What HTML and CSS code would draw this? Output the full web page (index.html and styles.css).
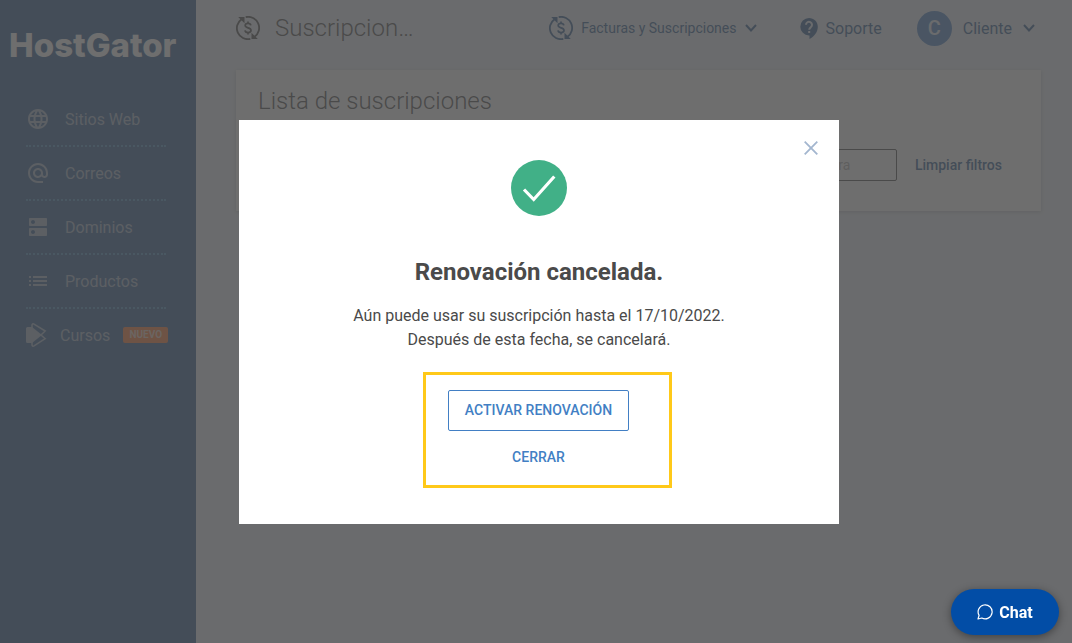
FILE: index.html
```html
<!DOCTYPE html>
<html lang="es">
<head>
    <meta charset="UTF-8">
    <meta name="viewport" content="width=device-width, initial-scale=1.0">
    <title>Suscripciones</title>
    <link rel="stylesheet" href="styles.css">
</head>
<body>
    <svg class="sprite" width="0" height="0" aria-hidden="true">
        <symbol id="icon-renew" viewBox="0 0 24 24">
            <path d="M5.500 3.200A11 11 0 0 0 14.300 22.900M9.700 1.100A11 11 0 0 1 18.500 20.800" fill="none" stroke="currentColor" stroke-width="1.800"/>
            <path d="M2.200 1h6.300v6.300zM21.800 23h-6.300v-6.300z" fill="currentColor"/>
            <path d="M14.800 9.300C14.600 8 13.600 7.400 12 7.400c-1.700 0-2.800.8-2.800 2.200 0 3 5.800 1.600 5.800 4.700 0 1.500-1.200 2.300-2.900 2.300-1.800 0-2.900-.8-3.100-2.200M12 5.500v2M12 16.500v2" fill="none" stroke="currentColor" stroke-width="1.700"/>
        </symbol>
        <symbol id="icon-chevron" viewBox="0 0 12 8">
            <path d="M1 1l5 5.500L11 1" fill="none" stroke="currentColor" stroke-width="2"/>
        </symbol>
    </svg>

    <div class="layout">
        <aside class="sidebar">
            <div class="logo">HostGator</div>
            <nav class="menu">
                <a href="#" class="menu-item">
                    <svg class="menu-icon" viewBox="2 2 20 20"><path d="M11.990 2C6.470 2 2 6.480 2 12s4.470 10 9.990 10C17.520 22 22 17.520 22 12S17.520 2 11.990 2zm6.930 6h-2.950c-.32-1.250-.78-2.450-1.380-3.560 1.840.63 3.370 1.910 4.330 3.560zM12 4.040c.83 1.200 1.480 2.530 1.910 3.960h-3.820c.43-1.430 1.080-2.760 1.910-3.960zM4.260 14C4.100 13.360 4 12.690 4 12s.1-1.360.26-2h3.380c-.08.66-.14 1.320-.14 2s.06 1.340.14 2H4.260zm.82 2h2.950c.32 1.250.78 2.450 1.380 3.560-1.840-.63-3.370-1.900-4.330-3.560zm2.950-8H5.080c.96-1.660 2.490-2.930 4.330-3.560C8.810 5.550 8.350 6.750 8.030 8zM12 19.960c-.83-1.200-1.480-2.530-1.910-3.960h3.820c-.43 1.430-1.080 2.760-1.910 3.960zM14.340 14H9.660c-.09-.66-.16-1.320-.16-2s.07-1.350.16-2h4.680c.09.65.16 1.320.16 2s-.07 1.340-.16 2zm.25 5.560c.6-1.110 1.060-2.310 1.380-3.560h2.950c-.96 1.650-2.490 2.930-4.330 3.560zM16.360 14c.08-.66.14-1.320.14-2s-.06-1.340-.14-2h3.380c.16.64.26 1.310.26 2s-.1 1.360-.26 2h-3.380z"/></svg>
                    Sitios Web
                </a>
                <a href="#" class="menu-item">
                    <svg class="menu-icon" viewBox="2 2 20 20"><path d="M12 2C6.480 2 2 6.480 2 12s4.480 10 10 10h5v-2h-5c-4.340 0-8-3.660-8-8s3.660-8 8-8 8 3.660 8 8v1.430c0 .79-.71 1.570-1.500 1.570s-1.500-.78-1.500-1.570V12c0-2.760-2.240-5-5-5s-5 2.240-5 5 2.240 5 5 5c1.380 0 2.640-.56 3.540-1.470.65.89 1.770 1.470 2.960 1.470 1.970 0 3.500-1.600 3.500-3.570V12c0-5.520-4.480-10-10-10zm0 13c-1.660 0-3-1.340-3-3s1.340-3 3-3 3 1.340 3 3-1.340 3-3 3z"/></svg>
                    Correos
                </a>
                <a href="#" class="menu-item">
                    <svg class="menu-icon" viewBox="2 2 20 20"><path d="M20 13H4c-.55 0-1 .45-1 1v6c0 .55.45 1 1 1h16c.55 0 1-.45 1-1v-6c0-.55-.45-1-1-1zM7 19c-1.100 0-2-.9-2-2s.9-2 2-2 2 .9 2 2-.9 2-2 2zM20 3H4c-.55 0-1 .45-1 1v6c0 .55.45 1 1 1h16c.55 0 1-.45 1-1V4c0-.55-.45-1-1-1zM7 9c-1.100 0-2-.9-2-2s.9-2 2-2 2 .9 2 2-.9 2-2 2z"/></svg>
                    Dominios
                </a>
                <a href="#" class="menu-item">
                    <svg class="menu-icon" viewBox="2 2 20 20"><path d="M3 13h2v-2H3v2zm0 4h2v-2H3v2zm0-8h2V7H3v2zm4 4h14v-2H7v2zm0 4h14v-2H7v2zM7 7v2h14V7H7z"/></svg>
                    Productos
                </a>
                <a href="#" class="menu-item menu-item-new">
                    <svg class="course-icon" viewBox="0 0 21 26">
                        <path d="M1.500 5H6l10 8-10 8H1.500A1.500 1.500 0 0 1 0 19.500v-13A1.500 1.500 0 0 1 1.500 5z"/>
                        <path d="M6 7V3.200c0-1.200 1-1.700 2-1.100L19.200 9 15 13l4.200 3.700L8 23.900c-1 .6-2 .1-2-1.100V19" fill="none" stroke="currentColor" stroke-width="1.500"/>
                    </svg>
                    Cursos
                    <span class="badge">NUEVO</span>
                </a>
            </nav>
        </aside>

        <main class="main">
            <header class="header">
                <svg class="renew-icon"><use href="#icon-renew"/></svg>
                <h1>Suscripcion…</h1>
                <nav class="top-nav">
                    <a href="#" class="billing">
                        <svg class="renew-icon"><use href="#icon-renew"/></svg>
                        Facturas y Suscripciones
                        <svg class="chevron"><use href="#icon-chevron"/></svg>
                    </a>
                    <a href="#" class="support">
                        <svg class="help-icon" viewBox="0 0 18 21">
                            <path d="M9 0a8.700 8.700 0 0 0 0 17.400h.5V21c5-2.400 8.300-7.200 8.300-12.200C17.800 3.900 13.900 0 9 0z"/>
                            <path class="help-mark" d="M6 6.800a3 3 0 1 1 4.900 2.300C9.700 10 9.200 10.400 9.200 11.700M9.200 13v2"/>
                        </svg>
                        Soporte
                    </a>
                    <a href="#" class="account">
                        <span class="avatar">C</span>
                        Cliente
                        <svg class="chevron"><use href="#icon-chevron"/></svg>
                    </a>
                </nav>
            </header>

            <section class="card">
                <h2>Lista de suscripciones</h2>
                <form class="filters">
                    <input type="text" aria-label="Compra" placeholder="Compra">
                    <button type="reset" class="clear-btn">Limpiar filtros</button>
                </form>
            </section>
        </main>
    </div>

    <div class="overlay">
        <div class="modal" role="dialog" aria-modal="true" aria-labelledby="modal-title">
            <button class="close-btn" aria-label="Cerrar">
                <svg width="14" height="14" viewBox="0 0 14 14"><path d="M.7.7l12.600 12.600M13.300.7L.7 13.300" stroke="currentColor" stroke-width="1.800"/></svg>
            </button>
            <svg class="check" viewBox="0 0 56 56">
                <circle cx="28" cy="28" r="28" fill="#41b087"/>
                <path d="M13 29.500l9.700 10L43.300 16.500" fill="none" stroke="#fff" stroke-width="3.200"/>
            </svg>
            <h2 id="modal-title">Renovación cancelada.</h2>
            <p>Aún puede usar su suscripción hasta el 17/10/2022.<br>Después de esta fecha, se cancelará.</p>
            <div class="actions">
                <button class="btn btn-outline">ACTIVAR RENOVACIÓN</button>
                <button class="btn">CERRAR</button>
            </div>
        </div>
    </div>

    <button class="chat-btn">
        <svg width="16" height="16" viewBox="0 0 16 16"><path d="M1 15l1.100-3.600A7 7 0 1 1 4.800 14z" fill="none" stroke="currentColor" stroke-width="1.200" stroke-linejoin="round"/></svg>
        Chat
    </button>
</body>
</html>
```
FILE: styles.css
```css
* {
    margin: 0;
    padding: 0;
    box-sizing: border-box;
}

body {
    font-family: Roboto, "Liberation Sans", sans-serif;
    font-size: 16px;
    color: #4a4a4a;
    background-color: #ebf0f7;
}

a {
    color: inherit;
    text-decoration: none;
}

button,
input {
    font-family: inherit;
    background: none;
    border: none;
}

button {
    cursor: pointer;
}

svg {
    flex-shrink: 0;
    fill: currentColor;
}

.sprite {
    position: absolute;
}

.layout {
    display: flex;
    min-height: 100vh;
}

/* Sidebar */
.sidebar {
    width: 196px;
    flex-shrink: 0;
    background-color: #2e5d93;
}

.logo {
    padding: 25px 0 28px 9px;
    font-family: Inter, sans-serif;
    font-size: 33px;
    line-height: 40px;
    font-weight: 800;
    color: #fff;
}

.menu {
    padding: 0 30px 0 26px;
    color: #a5b4c8;
}

.menu-item {
    display: flex;
    align-items: center;
    height: 54px;
    padding-left: 2px;
    gap: 17px;
    border-bottom: 2px dotted #4a90c0;
}

.menu-item-new {
    padding-left: 0;
    gap: 13px;
    border-bottom-color: transparent;
}

.menu-icon {
    width: 20px;
    height: 20px;
}

.course-icon {
    width: 21px;
    height: 26px;
}

.badge {
    flex-shrink: 0;
    width: 45px;
    border-radius: 2px;
    background-color: #ff7a33;
    color: #f0d0c0;
    font-size: 10px;
    line-height: 16px;
    font-weight: 700;
    text-align: center;
}

/* Header */
.main {
    flex: 1;
    min-width: 0;
    padding: 0 31px 0 40px;
}

.header {
    display: flex;
    align-items: center;
    height: 56px;
    margin-bottom: 14px;
}

.header h1,
.card h2 {
    font-size: 24px;
    line-height: 32px;
    font-weight: 300;
}

.header h1 {
    margin-left: 15px;
}

.renew-icon {
    width: 24px;
    height: 24px;
}

.top-nav {
    display: flex;
    align-items: center;
    margin-left: auto;
    padding-right: 6px;
    color: #2e5d93;
}

.top-nav a {
    display: flex;
    align-items: center;
    gap: 8px;
}

.billing {
    font-size: 14px;
}

.support {
    margin: 0 35px 0 43px;
}

.top-nav .account {
    gap: 11px;
}

.help-icon {
    width: 18px;
    height: 21px;
}

.help-mark {
    fill: none;
    stroke: #ebf0f7;
    stroke-width: 2;
}

.chevron {
    width: 12px;
    height: 8px;
}

.avatar {
    width: 35px;
    border-radius: 50%;
    background-color: #4a83c8;
    color: #ebf0f7;
    font-size: 20px;
    line-height: 35px;
    font-weight: 500;
    text-align: center;
}

/* Filters card */
.card {
    padding: 15px 39px 30px 22px;
    background-color: #fff;
    box-shadow: 0 1px 4px rgba(0, 0, 0, 0.2);
}

.filters {
    display: flex;
    justify-content: flex-end;
    align-items: center;
    gap: 18px;
    margin-top: 32px;
}

.filters input {
    width: 111px;
    height: 32px;
    padding: 0 14px;
    border: 1px solid #4a4a4a;
    border-radius: 2px;
    font-size: 14px;
}

.filters input::placeholder {
    color: #b0b0b0;
}

.clear-btn {
    color: #2e5d93;
    font-size: 14px;
    font-weight: 500;
}

/* Modal */
.overlay {
    position: fixed;
    inset: 0;
    display: flex;
    justify-content: center;
    align-items: center;
    padding: 1px 0 0 6px;
    background-color: rgba(74, 74, 74, 0.8);
}

.modal {
    position: relative;
    display: flex;
    flex-direction: column;
    align-items: center;
    width: 600px;
    padding: 40px 24px 36px;
    background-color: #fff;
    text-align: center;
}

.close-btn {
    position: absolute;
    top: 21px;
    right: 21px;
    height: 14px;
    color: #a3b6cf;
}

.check {
    width: 56px;
    height: 56px;
}

.modal h2 {
    margin: 40px 0 16px;
    font-size: 24px;
    line-height: 32px;
    font-weight: 700;
}

.modal p {
    line-height: 24px;
}

.actions {
    display: flex;
    flex-direction: column;
    align-items: center;
    margin: 20px 0 0 17px;
    padding: 15px 40px 7px 22px;
    border: 3px solid #ffc919;
}

.btn {
    padding: 0 16px;
    color: #427fc4;
    font-size: 14px;
    line-height: 39px;
    font-weight: 500;
    border: 1px solid transparent;
    border-radius: 2px;
}

.btn-outline {
    margin-bottom: 6px;
    border-color: #427fc4;
}

/* Chat */
.chat-btn {
    position: fixed;
    right: 13px;
    bottom: 8px;
    display: flex;
    align-items: center;
    justify-content: center;
    gap: 6px;
    width: 108px;
    height: 46px;
    border-radius: 23px;
    background-color: #024da6;
    color: #fff;
    font-size: 16px;
    font-weight: 700;
    box-shadow: 0 2px 8px rgba(0, 0, 0, 0.4);
}
```
